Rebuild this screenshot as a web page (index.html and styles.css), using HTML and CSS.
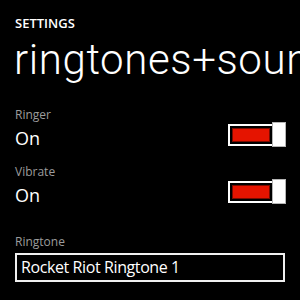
FILE: index.html
```html
<!DOCTYPE html>
<html>
<head>
<meta charset="utf-8">
<link rel="stylesheet" href="styles.css">
</head>
<body>
<div class="page">
  <div class="app-title">SETTINGS</div>
  <div class="page-title">ringtones+sounds</div>
  <div class="setting">
    <div class="setting-text">
      <div class="label">Ringer</div>
      <div class="value">On</div>
    </div>
    <div class="toggle">
      <div class="track"><div class="fill"></div></div>
      <div class="thumb"></div>
    </div>
  </div>
  <div class="setting second">
    <div class="setting-text">
      <div class="label">Vibrate</div>
      <div class="value">On</div>
    </div>
    <div class="toggle">
      <div class="track"><div class="fill"></div></div>
      <div class="thumb"></div>
    </div>
  </div>
  <div class="label ringtone-label">Ringtone</div>
  <div class="picker">Rocket Riot Ringtone 1</div>
</div>
</body>
</html>
```
FILE: styles.css
```css
html, body {
  margin: 0;
  padding: 0;
  background: #000;
  width: 300px;
  height: 300px;
  overflow: hidden;
}
.page {
  padding: 15px 14px 0 15px;
  font-family: "Open Sans", "Noto Sans", sans-serif;
  color: #fff;
}
.app-title {
  font-size: 13px;
  font-weight: 600;
  line-height: 16px;
}
.page-title {
  font-family: Roboto, "Open Sans", sans-serif;
  font-size: 42px;
  font-weight: 300;
  letter-spacing: 0.6px;
  line-height: 50px;
  margin-top: 4px;
  margin-left: -1px;
  margin-right: -14px;
  white-space: nowrap;
  overflow: hidden;
}
.setting {
  display: flex;
  justify-content: space-between;
  margin-top: 22px;
}
.setting.second {
  margin-top: 14px;
}
.setting-text {
  display: flex;
  flex-direction: column;
  gap: 4px;
}
.label {
  font-size: 12px;
  line-height: 15px;
  color: #9c9c9c;
}
.value {
  font-size: 18px;
  line-height: 24px;
}
.toggle {
  display: flex;
  align-items: center;
  align-self: flex-end;
  margin-bottom: 3px;
}
.track {
  box-sizing: border-box;
  width: 44px;
  height: 22px;
  border: 2px solid #fff;
  border-right: none;
  padding: 2px 2px 2px 2px;
  display: flex;
}
.fill {
  flex: 1;
  background: #e51400;
  border: 1px solid #7a0b00;
}
.thumb {
  box-sizing: border-box;
  width: 14px;
  height: 25px;
  background: #fff;
  border: 1px solid #b5b5b5;
}
.ringtone-label {
  margin-top: 27px;
}
.picker {
  box-sizing: border-box;
  margin-top: 4px;
  width: 270px;
  height: 29px;
  border: 2px solid #f0f0f0;
  padding-left: 4px;
  font-size: 16px;
  letter-spacing: -0.4px;
  line-height: 25px;
  white-space: nowrap;
}
```
